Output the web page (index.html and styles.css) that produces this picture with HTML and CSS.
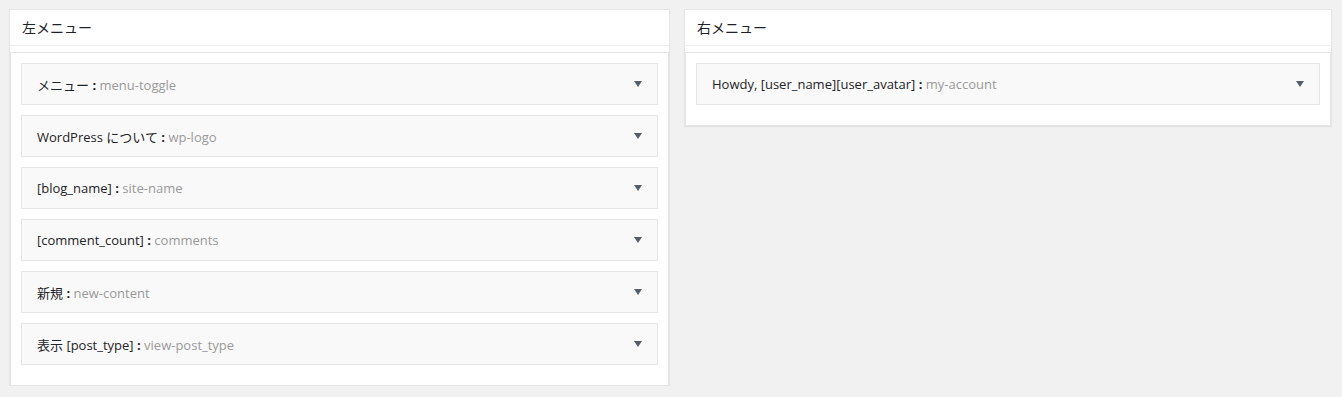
FILE: index.html
```html
<!DOCTYPE html>
<html>

<head>
  <meta charset="UTF-8">
  <title>ツールバーメニュー</title>
  <link rel="stylesheet" href="styles.css">
</head>

<body>
  <div class="columns">
    <div class="postbox">
      <h2 class="hndle">左メニュー</h2>
      <div class="inside">
        <div class="menuItem"><span class="text"><span class="label">メニュー <b>:</b></span> <span class="slug">menu-toggle</span></span><i class="arrow"></i></div>
        <div class="menuItem"><span class="text"><span class="label">WordPress について <b>:</b></span> <span class="slug">wp-logo</span></span><i class="arrow"></i></div>
        <div class="menuItem"><span class="text"><span class="label">[blog_name] <b>:</b></span> <span class="slug">site-name</span></span><i class="arrow"></i></div>
        <div class="menuItem"><span class="text"><span class="label">[comment_count] <b>:</b></span> <span class="slug">comments</span></span><i class="arrow"></i></div>
        <div class="menuItem"><span class="text"><span class="label">新規 <b>:</b></span> <span class="slug">new-content</span></span><i class="arrow"></i></div>
        <div class="menuItem"><span class="text"><span class="label">表示 [post_type] <b>:</b></span> <span class="slug">view-post_type</span></span><i class="arrow"></i></div>
      </div>
    </div>
    <div class="postbox">
      <h2 class="hndle">右メニュー</h2>
      <div class="inside">
        <div class="menuItem"><span class="text"><span class="label">Howdy, [user_name][user_avatar] <b>:</b></span> <span class="slug">my-account</span></span><i class="arrow"></i></div>
      </div>
    </div>
  </div>
</body>

</html>
```

FILE: styles.css
```css
h1,
h2,
p {
  margin: 0;
  font-weight: 400;
}

body {
  margin: 0;
  padding: 9px 0 0 9px;
  background-color: #f1f1f1;
  font-family: "Open Sans", "Noto Sans CJK JP", sans-serif;
  color: #23282d;
}

.columns {
  display: grid;
  grid-template-columns: 661px 648px;
  column-gap: 14px;
  align-items: start;
}

.postbox {
  background-color: #fff;
  border: 1px solid #e5e5e5;
  box-shadow: 0 1px 1px rgba(0, 0, 0, 0.06);
}

.hndle {
  height: 35px;
  line-height: 35px;
  padding: 0 12px;
  font-size: 14px;
  color: #1d2327;
  border-bottom: 1px solid #eee;
  margin-bottom: 6px;
}

.inside {
  border: 1px solid #e5e5e5;
  border-bottom: none;
  padding: 10px;
}

.menuItem {
  display: flex;
  align-items: center;
  height: 40px;
  margin-bottom: 10px;
  padding: 0 15px;
  background-color: #f9f9f9;
  border: 1px solid #e5e5e5;
  font-size: 13px;
}

.label {
  color: #1d2327;
}

.label b {
  font-weight: 700;
}

.slug {
  color: #999;
}

.arrow {
  margin-left: auto;
  width: 0;
  height: 0;
  border-left: 4px solid transparent;
  border-right: 4px solid transparent;
  border-top: 6px solid #555d66;
}
```
